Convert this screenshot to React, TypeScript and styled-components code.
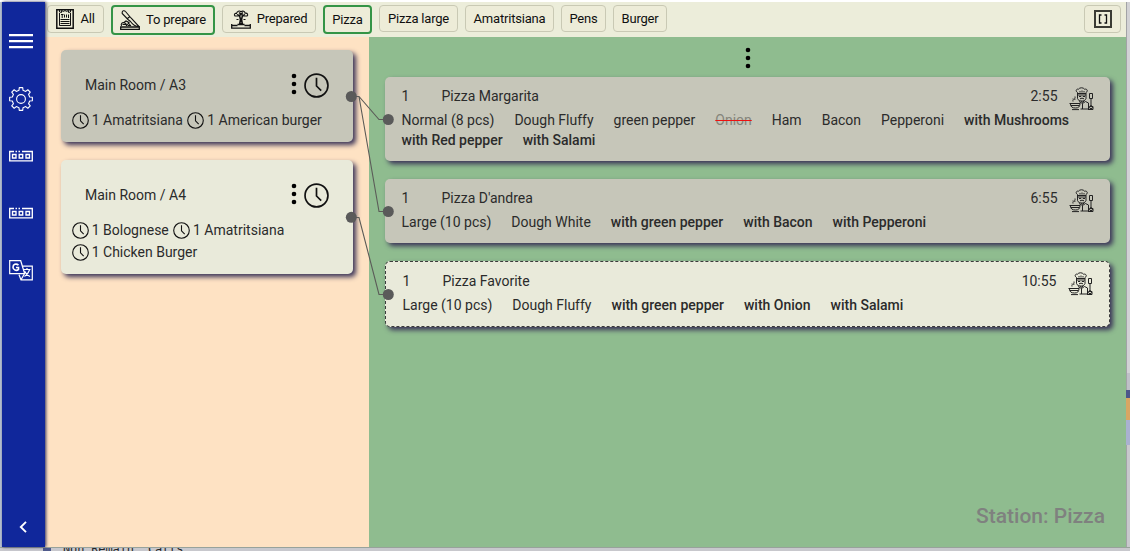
import React from 'react';
import styled, { createGlobalStyle } from 'styled-components';

const GlobalStyle = createGlobalStyle`
  * { box-sizing: border-box; }
  html, body { margin: 0; padding: 0; }
  body { font-family: Roboto, sans-serif; font-size: 14px; color: #2b2b2b; overflow: hidden; }
  svg { display: block; flex: none; }
`;

const Desktop = styled.div`
  width: 1130px;
  height: 551px;
  display: grid;
  grid-template-columns: 2px 1124px 4px;
  grid-template-rows: 2px 545px 4px;
  background: #c8c8cd;
  overflow: hidden;
`;
const TopEdge = styled.div`
  grid-column: 1 / 4;
  background: #fff;
`;
const LeftEdge = styled.div`
  background: #b9c4d4;
`;
const RightEdge = styled.div`
  display: flex;
  flex-direction: column;
  box-shadow: inset 1px 0 #a2a3a6;
`;
const Swatch = styled.div<{ $h: number; $c: string; $edge?: boolean }>`
  flex: none;
  height: ${p => p.$h}px;
  margin-left: ${p => (p.$edge ? 1 : 0)}px;
  background: ${p => p.$c};
`;
const BottomEdge = styled.div`
  grid-column: 1 / 4;
  display: flex;
  border-top: 1px solid #98a29b;
  padding-left: 41px;
  overflow: hidden;
`;
const Marker = styled.div`
  width: 8px;
  height: 4px;
  margin-left: 2px;
  background: #4f5a8c;
`;
const BackText = styled.div`
  margin: -5px 0 0 12px;
  font: 12px/12px 'DejaVu Sans Mono', monospace;
  letter-spacing: -0.15px;
  white-space: pre;
  color: #252528;
`;

const Window = styled.div`
  position: relative;
  display: grid;
  grid-template-columns: 43px 1fr;
`;
const Sidebar = styled.nav`
  display: flex;
  flex-direction: column;
  align-items: center;
  padding: 26px 5px 9px 0;
  background: #10279b;
  box-shadow: 1px 0 3px #30305a;
  z-index: 1;
`;
const SideButton = styled.div<{ $h: number }>`
  height: ${p => p.$h}px;
  display: flex;
  align-items: center;
  justify-content: center;
  color: #fff;
`;
const Collapse = styled.div`
  margin-top: auto;
  padding: 0 0 5px 4px;
`;
const Main = styled.div`
  display: grid;
  grid-template-rows: 35px 1fr;
  min-width: 0;
`;
const Toolbar = styled.header`
  display: flex;
  align-items: flex-start;
  gap: 7px;
  padding: 3px 5px 0 2px;
  background: #ecedda;
`;
const Filter = styled.button<{ $w: number; $h: number; $active?: boolean; $end?: boolean }>`
  width: ${p => p.$w}px;
  height: ${p => p.$h}px;
  flex: none;
  display: flex;
  align-items: center;
  justify-content: center;
  gap: 6px;
  padding: 0;
  margin-left: ${p => (p.$end ? 'auto' : '0')};
  border: ${p => (p.$active ? '2px solid #349446' : '1px solid #c9c9b4')};
  border-radius: 4px;
  background: #edecd8;
  font: 400 13px/20px Roboto, sans-serif;
  letter-spacing: -0.2px;
  color: #101010;
  white-space: nowrap;
`;
const Board = styled.div`
  display: grid;
  grid-template-columns: 324px 1fr;
`;
const Rooms = styled.section`
  display: flex;
  flex-direction: column;
  gap: 18px;
  padding: 13px 16px;
  background: #fee2c3;
`;
const Station = styled.section`
  display: flex;
  flex-direction: column;
  gap: 18px;
  padding: 10px 16px 18px;
  background: #8fbc8f;
`;
const MenuRow = styled.div`
  display: flex;
  justify-content: center;
  height: 12px;
`;
const Card = styled.article<{ $h: number; $done?: boolean; $dashed?: boolean }>`
  height: ${p => p.$h}px;
  flex: none;
  border-radius: 5px;
  border: ${p => (p.$dashed ? '1px dashed #3b3b3b' : '0')};
  background: ${p => (p.$done ? '#c6c6b9' : '#e9eada')};
  box-shadow: 3px 3px 5px #3b3458;
`;
const RoomCard = styled(Card)`
  padding: 20px 10px 0 10.5px;
`;
const RoomHead = styled.div`
  display: flex;
  align-items: center;
  height: 30px;
  padding: 0 14.5px 0 13.5px;
`;
const HeadIcons = styled.div`
  display: flex;
  align-items: flex-start;
  gap: 6.5px;
  margin-left: auto;
`;
const Dishes = styled.div`
  display: flex;
  flex-wrap: wrap;
  column-gap: 4px;
  padding-top: 9px;
`;
const Dish = styled.span`
  display: flex;
  align-items: center;
  gap: 3.2px;
  height: 22px;
  white-space: nowrap;
`;
const OrderCard = styled(Card)`
  padding: 9px 16px 9px 16.5px;
`;
const OrderHead = styled.div`
  display: flex;
  align-items: center;
  height: 20px;
`;
const Count = styled.span`
  width: 40px;
`;
const Time = styled.span`
  margin-left: auto;
  margin-right: 11.5px;
`;
const ChefSlot = styled.span`
  height: 20px;
  padding-top: 1px;
`;
const Options = styled.div`
  display: flex;
  flex-wrap: wrap;
  column-gap: 20px;
  padding-top: 4px;
`;
const Option = styled.span<{ $kind?: string }>`
  line-height: 20px;
  white-space: nowrap;
  font-weight: ${p => (p.$kind === 'extra' ? 500 : 400)};
  color: ${p => (p.$kind === 'removed' ? '#85857b' : '#2b2b2b')};
  text-decoration: ${p => (p.$kind === 'removed' ? 'line-through #ee1111' : 'none')};
`;
const StationName = styled.div`
  margin-top: auto;
  align-self: flex-end;
  margin-right: 5px;
  font-size: 21px;
  line-height: 26px;
  font-weight: 500;
  color: #7f817f;
`;
const Connections = styled.svg`
  position: absolute;
  left: 0;
  top: 0;
  z-index: 2;
  pointer-events: none;
`;

const Clock = ({ size, stroke = 1.3 }: { size: number; stroke?: number }) => (
  <svg width={size} height={size} viewBox="0 0 24 24" fill="none" stroke="#111" strokeWidth={stroke * 24 / size}>
    <circle cx="12" cy="12" r="11" />
    <path d="M12 4.5v8l4.5 4.5" />
  </svg>
);
const Dots = () => (
  <svg width="6" height="22" viewBox="0 0 6 22" fill="#000">
    <circle cx="3" cy="3" r="2.3" /><circle cx="3" cy="11" r="2.3" /><circle cx="3" cy="19" r="2.3" />
  </svg>
);
const Chef = () => (
  <svg width="25" height="24" viewBox="0 0 25 24" fill="none" stroke="#222" strokeWidth="1">
    <path d="M8.500 5.500C6 4 7.500 1.500 9.500 2.200c1-1.900 5-1.900 6 0 2.500-.7 4 1.800 1.500 3.300V8H8.500zM8.500 6.500H17M11 4v1.500M13 3.500v2M15 4v1.500M8.500 8v3.500c1 3.500 7.500 3.500 8.500 0V8M10 9.500h2.200M13.800 9.500H16M11 11.800q2-1.300 4 0" />
    <path d="M.5 16.500h11M1.500 17c0 3 2 4 5 4s4-1 4.500-4M3 22.600h7M2 18.500h8M4 14.500c-1-1 1-1 0-3M6 13c-1-1.500.5-2 0-3.500" />
    <path d="M10 14.500l3.500 2 3-2 3 1.500v6h-8M13.500 16.500v5.500M12 13.500l1.500 2 2-2M19 22.500h5v-3h-3M20.500 6.500h3v5h-3zM22 11.500V19" />
    <circle cx="22" cy="20.200" r="1.500" />
  </svg>
);
const Receipt = () => (
  <svg width="18" height="20" viewBox="0 0 18 20" fill="none" stroke="#111">
    <path d="M.8.8h16.400v18.400H.8z" strokeWidth="1.500" />
    <path d="M3.500 1v2l2 .5V1.500l2 1 1.500-1 1.500 1 2-1v2l2-.5V1" strokeWidth="1" />
    <path d="M3.500 4v12.500h11V4M5 5.500h2.500M6.200 5.500v3.500M8.500 5.500v3M10.500 5.500v3M12.500 5.500v3.500M4.500 10.500h9M4.500 12.500h9M4.500 14.500h9M7 16.500h4" strokeWidth="1" />
  </svg>
);
const Cutting = () => (
  <svg width="20" height="20" viewBox="0 0 20 20" fill="none" stroke="#111" strokeWidth="1.1">
    <path d="M2.200 2.500C2 .5 4.500.2 5.500 1.500L11 8l8 8.500c-4 0-6.500-2-8.500-5L8 9.500 2.200 3.500zM7.500 8.500l2.500-2" />
    <path d="M.7 17h18.600v2.300H.7z" strokeWidth="1.300" />
    <path d="M1.500 16c-1-2.500 1-4 3-3 1 0 2 1 2 3M4 12.500l2-1.500 3 1.500-2 3M8 12.500l3 3.500M2.500 14.500h4M8 15.500h3" />
  </svg>
);
const Served = () => (
  <svg width="20" height="19" viewBox="0 0 20 19" fill="none" stroke="#111" strokeWidth="1.1">
    <path d="M4 6C2.500 4.500 4 3 5.500 3.500 6 1 8.500.5 10 1.700c2-1.400 4 0 4 1.500 2.500-.5 3.500 1.500 2 2.800zM6 4.500l2.500.8 1.500-2 2 2 2-.8M8 2.500l2 2 2-2M8.500 6.500l.7 3-.7 4h3l-.7-4 .7-3M5.500 9.500h2M12.500 9.500h2M10 7v6" />
    <path d="M.7 14v4.200h18.600V14M1 15.500h5.500M13.500 15.500H19M6.500 14.500h7" strokeWidth="1.300" />
  </svg>
);
const Expand = () => (
  <svg width="18" height="18" viewBox="0 0 18 18" fill="none" stroke="#3b3b34">
    <rect x="1" y="1" width="16" height="16" strokeWidth="2" />
    <path d="M7.500 5h-2v8h2M10.500 5h2v8h-2" stroke="#111" strokeWidth="1.3" />
  </svg>
);
const Burger = () => (
  <svg width="24" height="15" viewBox="0 0 24 15" fill="#fff">
    <path d="M0 0h24v2.200H0zM0 6h24v2.200H0zM0 12h24v2.200H0z" />
  </svg>
);
const gearPath = (() => {
  const points: string[] = [];
  for (let i = 0; i < 8; i++) {
    [[-0.23, 8.9], [-0.15, 11.5], [0.15, 11.5], [0.23, 8.9]].forEach(([offset, radius]) => {
      const angle = (i * Math.PI) / 4 + offset;
      points.push(`${(12 + radius * Math.sin(angle)).toFixed(2)},${(12 - radius * Math.cos(angle)).toFixed(2)}`);
    });
  }
  return `M${points.join('L')}Z`;
})();
const Gear = () => (
  <svg width="24" height="24" viewBox="0 0 24 24" fill="none" stroke="#fff" strokeWidth="1.1" strokeLinejoin="round">
    <path d={gearPath} /><circle cx="12" cy="12" r="4.4" />
  </svg>
);
const Counter = () => (
  <svg width="24" height="12" viewBox="0 0 24 12" fill="none" stroke="#fff" strokeWidth="1.35">
    <path d="M5 1.500H.7v9.300h22.600V1.500H13M6.500 1.500H8M9.500 1.500H11" />
    <path d="M3.500 4.500H7V8H3.500zM10.200 4.500h3.500V8h-3.500zM17 4.500h3.500V8H17z" />
  </svg>
);
const Translate = () => (
  <svg width="24" height="21" viewBox="0 0 24 21" fill="none" stroke="#fff" strokeWidth="1.2">
    <path d="M.7.7h11l4 13H.7zM13 6.200h10.300v13.600H12l-2-5M12 19.800l3.500-6" />
    <path d="M9.500 5.200C7 3 4 4.500 4 7.200s3.500 4.200 5.500 2.200V7.500H7" strokeWidth="1.6" />
    <path d="M14.500 9.500h7M18 8v1.500M20.500 10c-1 3-2.500 5-5 6.500M15.500 11c1 2.500 3 4.500 5.500 5.500" />
  </svg>
);
const Chevron = () => (
  <svg width="8" height="12" viewBox="0 0 8 12" fill="none" stroke="#fff" strokeWidth="1.9">
    <path d="M7 .8L1.800 6 7 11.200" />
  </svg>
);

type Order = { h: number; name: string; time: string; done?: boolean; options: [string, string?][] };
const orders: Order[] = [
  { h: 84, name: 'Pizza Margarita', time: '2:55', done: true, options: [['Normal (8 pcs)'], ['Dough Fluffy'], ['green pepper'], ['Onion', 'removed'], ['Ham'], ['Bacon'], ['Pepperoni'], ['with Mushrooms', 'extra'], ['with Red pepper', 'extra'], ['with Salami', 'extra']] },
  { h: 64, name: "Pizza D'andrea", time: '6:55', done: true, options: [['Large (10 pcs)'], ['Dough White'], ['with green pepper', 'extra'], ['with Bacon', 'extra'], ['with Pepperoni', 'extra']] },
  { h: 66, name: 'Pizza Favorite', time: '10:55', options: [['Large (10 pcs)'], ['Dough Fluffy'], ['with green pepper', 'extra'], ['with Onion', 'extra'], ['with Salami', 'extra']] },
];
const rooms = [
  { name: 'Main Room / A3', h: 92, done: true, dishes: ['1 Amatritsiana', '1 American burger'] },
  { name: 'Main Room / A4', h: 114, done: false, dishes: ['1 Bolognese', '1 Amatritsiana', '1 Chicken Burger'] },
];

export default function App() {
  return (
    <>
      <GlobalStyle />
      <Desktop>
        <TopEdge />
        <LeftEdge />
        <Window>
          <Sidebar>
            <SideButton $h={26}><Burger /></SideButton>
            <SideButton $h={90}><Gear /></SideButton>
            <SideButton $h={24}><Counter /></SideButton>
            <SideButton $h={90}><Counter /></SideButton>
            <SideButton $h={24}><Translate /></SideButton>
            <Collapse><Chevron /></Collapse>
          </Sidebar>
          <Main>
            <Toolbar>
              <Filter $w={57} $h={28}><Receipt />All</Filter>
              <Filter $w={104} $h={30} $active><Cutting />To prepare</Filter>
              <Filter $w={94} $h={28}><Served />Prepared</Filter>
              <Filter $w={49} $h={29} $active>Pizza</Filter>
              <Filter $w={79} $h={27}>Pizza large</Filter>
              <Filter $w={89} $h={27}>Amatritsiana</Filter>
              <Filter $w={45} $h={27}>Pens</Filter>
              <Filter $w={54} $h={27}>Burger</Filter>
              <Filter $w={37} $h={28} $end><Expand /></Filter>
            </Toolbar>
            <Board>
              <Rooms>
                {rooms.map(room => (
                  <RoomCard key={room.name} $h={room.h} $done={room.done}>
                    <RoomHead>{room.name}<HeadIcons><Dots /><Clock size={25} stroke={1.7} /></HeadIcons></RoomHead>
                    <Dishes>{room.dishes.map(dish => <Dish key={dish}><Clock size={17} stroke={1.1} />{dish}</Dish>)}</Dishes>
                  </RoomCard>
                ))}
              </Rooms>
              <Station>
                <MenuRow><Dots /></MenuRow>
                {orders.map(order => (
                  <OrderCard key={order.name} $h={order.h} $done={order.done} $dashed={!order.done}>
                    <OrderHead>
                      <Count>1</Count>{order.name}<Time>{order.time}</Time><ChefSlot><Chef /></ChefSlot>
                    </OrderHead>
                    <Options>{order.options.map(([text, kind]) => <Option key={text} $kind={kind}>{text}</Option>)}</Options>
                  </OrderCard>
                ))}
                <StationName>Station: Pizza</StationName>
              </Station>
            </Board>
          </Main>
          <Connections width="400" height="320" viewBox="2 2 400 320" fill="none" stroke="#5b5b58" strokeWidth="1.1">
            <path d="M351 96.500h8l20 23h9M359 96.500l20 115h9M351 217.500h8l20 77h9" />
            <g fill="#5a5a5a" stroke="none">
              <circle cx="351.300" cy="96.500" r="5.500" /><circle cx="351.300" cy="217.300" r="5.500" />
              <circle cx="388.300" cy="119.500" r="5.500" /><circle cx="388.300" cy="211.500" r="5.500" /><circle cx="388.300" cy="294.500" r="5.500" />
            </g>
          </Connections>
        </Window>
        <RightEdge>
          <Swatch $h={371} $c="#d2d2d5" $edge />
          <Swatch $h={17} $c="#bfc0c8" $edge />
          <Swatch $h={8} $c="#4c568a" />
          <Swatch $h={22} $c="#d8a663" />
          <Swatch $h={25} $c="#a9b1d0" />
        </RightEdge>
        <BottomEdge><Marker /><BackText>Non Remain  Calls</BackText></BottomEdge>
      </Desktop>
    </>
  );
}
